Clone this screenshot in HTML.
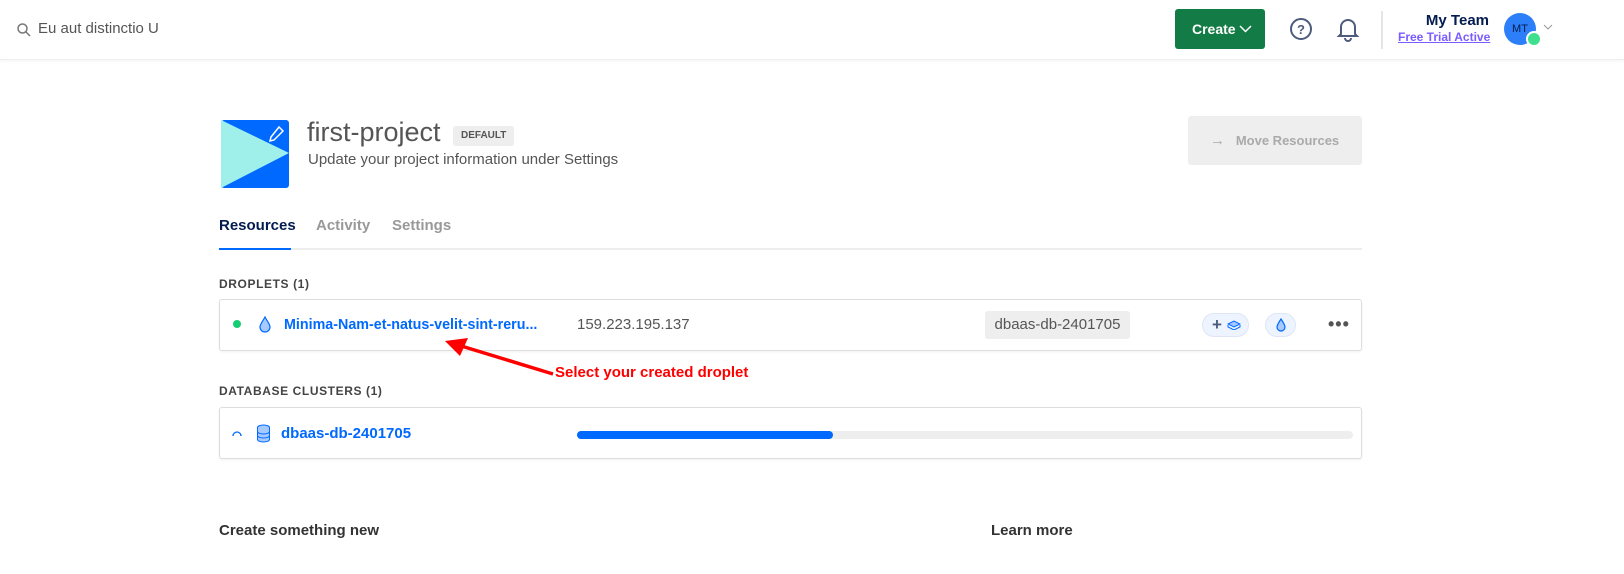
<!DOCTYPE html>
<html><head><style>
*{box-sizing:border-box;margin:0;padding:0}
body{width:1624px;height:574px;background:#fff;font-family:"Liberation Sans",sans-serif;position:relative;overflow:hidden;color:#333}
.a{position:absolute}
.hdr{left:0;top:0;width:1624px;height:60px;border-bottom:1px solid #eee;box-shadow:0 1px 3px rgba(0,0,0,.05)}
.link{color:#0069ff;font-weight:bold}
.card{border:1px solid #ddd;border-radius:3px;box-shadow:0 1px 2px rgba(0,0,0,.06)}
.lbl{font-size:12px;font-weight:bold;letter-spacing:.6px;color:#444}
</style></head><body>
<div class="a hdr"></div>
<svg class="a" style="left:16px;top:22px" width="16" height="16" viewBox="0 0 16 16"><circle cx="6.5" cy="6.5" r="4.5" fill="none" stroke="#777" stroke-width="1.5"/><path d="M10 10l4 4" stroke="#777" stroke-width="1.5"/></svg>
<div class="a" style="left:38px;top:20px;font-size:15px;color:#555">Eu aut distinctio U</div>
<div class="a" style="left:1175px;top:9px;width:90px;height:40px;background:#137b45;border-radius:3px;color:#fff;font-weight:bold;font-size:14px;line-height:40px;padding-left:17px">Create<svg style="position:absolute;left:64px;top:16px" width="13" height="8"><path d="M1 1l5.5 5.5 5.5-5.5" stroke="#fff" stroke-width="1.5" fill="none"/></svg></div>
<svg class="a" style="left:1289px;top:17px" width="24" height="24"><circle cx="12" cy="12" r="10" fill="none" stroke="#4d5b7c" stroke-width="2"/><text x="12" y="17" text-anchor="middle" font-size="13" font-weight="bold" fill="#4d5b7c" font-family="Liberation Sans">?</text></svg>
<svg class="a" style="left:1336px;top:16px" width="24" height="26"><path d="M5 18V11a7 7 0 0114 0v7l2 2H3z" fill="none" stroke="#4d5b7c" stroke-width="2"/><path d="M9 22a3 3 0 006 0" fill="none" stroke="#4d5b7c" stroke-width="2"/></svg>
<div class="a" style="left:1381px;top:11px;width:2px;height:38px;background:#e5e5e5"></div>
<div class="a" style="left:1400px;top:12px;width:89px;text-align:right;font-weight:bold;font-size:15px;color:#031b4e">My Team</div>
<div class="a" style="left:1398px;top:30px;font-size:12px;font-weight:bold;color:#7a5cff;text-decoration:underline">Free Trial Active</div>
<div class="a" style="left:1504px;top:13px;width:32px;height:32px;border-radius:50%;background:#2d7ff9;color:#031b4e;font-size:11px;text-align:center;line-height:32px">MT</div>
<div class="a" style="left:1526px;top:31px;width:16px;height:16px;border-radius:50%;background:#3ee08e;border:2px solid #fff"></div>
<svg class="a" style="left:1543px;top:24px" width="10" height="7"><path d="M1 1l4 4 4-4" stroke="#999" fill="none"/></svg>

<svg class="a" style="left:221px;top:120px" width="68" height="68"><rect width="68" height="68" rx="3" fill="#0069ff"/><path d="M0 0L68 33L0 68z" fill="#9ff0eb"/><path d="M58 7l4 4-9 9-4 1 1-4z" fill="none" stroke="#fff" stroke-width="1.5"/></svg>
<div class="a" style="left:307px;top:117px;font-size:27px;color:#555">first-project</div>
<div class="a" style="left:453px;top:126px;height:20px;padding:0 8px;background:#eee;border-radius:3px;font-size:10px;font-weight:bold;color:#555;line-height:20px">DEFAULT</div>
<div class="a" style="left:308px;top:151px;font-size:15px;color:#555">Update your project information under Settings</div>
<div class="a" style="left:1188px;top:116px;width:174px;height:49px;background:#eee;border-radius:3px;color:#aaa;font-weight:bold;font-size:13px;line-height:49px;padding-left:22px"><span style="font-size:15px">→</span>&nbsp;&nbsp; Move Resources</div>

<div class="a" style="left:219px;top:217px;font-size:15px;font-weight:bold;color:#031b4e">Resources</div>
<div class="a" style="left:316px;top:217px;font-size:15px;font-weight:bold;color:#999">Activity</div>
<div class="a" style="left:392px;top:217px;font-size:15px;font-weight:bold;color:#999">Settings</div>
<div class="a" style="left:219px;top:248px;width:1143px;height:2px;background:#eee"></div>
<div class="a" style="left:219px;top:248px;width:72px;height:2px;background:#0069ff"></div>

<div class="a lbl" style="left:219px;top:277px">DROPLETS (1)</div>
<div class="a card" style="left:219px;top:299px;width:1143px;height:52px"></div>
<div class="a" style="left:233px;top:320px;width:8px;height:8px;border-radius:50%;background:#15cd72"></div>
<svg class="a" style="left:258px;top:316px" width="14" height="17"><path d="M7 1C5 5 2 8 2 11a5 5 0 0010 0c0-3-3-6-5-10z" fill="#a6c9ff" stroke="#0069ff" stroke-width="1.2"/></svg>
<div class="a link" style="left:284px;top:317px;font-size:14.3px">Minima-Nam-et-natus-velit-sint-reru...</div>
<div class="a" style="left:577px;top:316px;font-size:15px;color:#555">159.223.195.137</div>
<div class="a" style="left:985px;top:311px;width:145px;height:28px;background:#eee;border-radius:3px;font-size:15px;color:#555;line-height:28px;text-align:center">dbaas-db-2401705</div>
<div class="a" style="left:1202px;top:313px;width:47px;height:24px;background:#eef4ff;border:1px solid #dde6f5;border-radius:12px;font-weight:bold;color:#4d5b7c;font-size:17px;line-height:21px;padding-left:9px">+<svg style="position:absolute;left:24px;top:6px" width="14" height="10"><path d="M1 4l6-3 6 3-6 3z" fill="#a6c9ff" stroke="#0069ff"/><path d="M1 5v2l6 3 6-3V5" fill="none" stroke="#0069ff"/></svg></div>
<div class="a" style="left:1265px;top:313px;width:31px;height:24px;background:#eef4ff;border:1px solid #dde6f5;border-radius:12px"><svg style="position:absolute;left:9px;top:4px" width="12" height="15"><path d="M6 1C4 4 2 7 2 9a4 4 0 008 0c0-2-2-5-4-8z" fill="#a6c9ff" stroke="#0069ff" stroke-width="1.2"/></svg></div>
<div class="a" style="left:1328px;top:314px;font-size:18px;font-weight:bold;color:#555;letter-spacing:1px">•••</div>

<svg class="a" style="left:440px;top:335px" width="115" height="45"><path d="M113 39L18 10" stroke="#f00" stroke-width="3.5"/><path d="M5 6L28 3 20 21z" fill="#f00"/></svg>
<div class="a" style="left:555px;top:364px;font-size:15px;font-weight:bold;color:#f00">Select your created droplet</div>

<div class="a lbl" style="left:219px;top:384px">DATABASE CLUSTERS (1)</div>
<div class="a card" style="left:219px;top:407px;width:1143px;height:52px"></div>
<svg class="a" style="left:231px;top:428px" width="12" height="10"><path d="M2 8a4 4 0 018 0" fill="none" stroke="#0069ff" stroke-width="1.3"/></svg>
<svg class="a" style="left:256px;top:424px" width="15" height="19"><ellipse cx="7.5" cy="3.5" rx="6" ry="2.5" fill="#a6c9ff" stroke="#0069ff"/><path d="M1.5 3.5v12c0 1.5 3 2.5 6 2.5s6-1 6-2.5v-12M1.5 7.5c0 1.5 3 2.5 6 2.5s6-1 6-2.5M1.5 11.5c0 1.5 3 2.5 6 2.5s6-1 6-2.5" fill="#a6c9ff" stroke="#0069ff"/></svg>
<div class="a link" style="left:281px;top:425px;font-size:15px">dbaas-db-2401705</div>
<div class="a" style="left:577px;top:431px;width:776px;height:8px;background:#eee;border-radius:4px"></div>
<div class="a" style="left:577px;top:431px;width:256px;height:8px;background:#0069ff;border-radius:4px"></div>

<div class="a" style="left:219px;top:522px;font-size:15px;font-weight:bold;color:#333">Create something new</div>
<div class="a" style="left:991px;top:522px;font-size:15px;font-weight:bold;color:#333">Learn more</div>
</body></html>
